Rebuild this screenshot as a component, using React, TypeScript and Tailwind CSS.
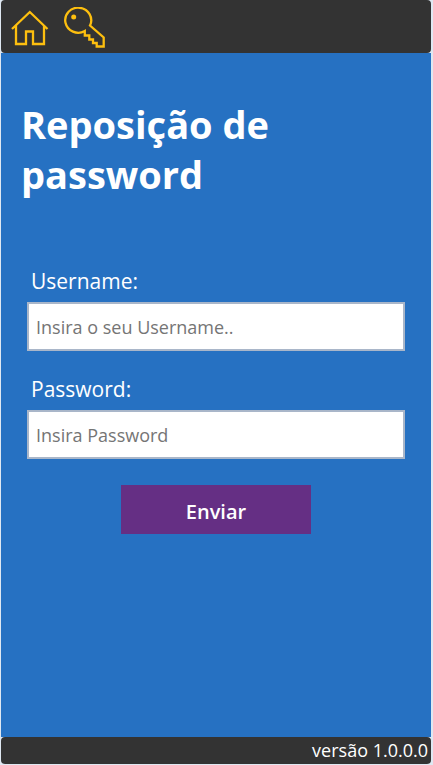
import React from "react";

function HomeIcon() {
  return (
    <svg width="38" height="36" viewBox="0 0 38 36" fill="none" stroke="#fdbf0f" strokeWidth="2.300" aria-hidden="true">
      <path d="M1 19 18.800 2l17.700 17M5 15.500V34H15V21.500H22V34H33V15.500" />
    </svg>
  );
}

function KeyIcon() {
  return (
    <svg width="42" height="42" viewBox="0 0 42 42" fill="none" stroke="#fdbf0f" strokeWidth="2.300" aria-hidden="true">
      <path d="M27 18.500A13 12.500 0 1 0 21.800 24V28.500H26.300V32.500H30V36H33.700V39.500H40.700V30.500z" />
      <circle cx="10.700" cy="10" r="2.500" fill="#fdbf0f" stroke="none" />
    </svg>
  );
}

type FieldProps = { id: string; label: string; type: string; placeholder: string };

function Field({ id, label, type, placeholder }: FieldProps) {
  return (
    <div>
      <label htmlFor={id} className="block pl-1 text-[21px] leading-8 text-white">
        {label}
      </label>
      <input
        id={id}
        type={type}
        placeholder={placeholder}
        className="mt-[5px] block h-[49px] w-full border-2 border-[#a9b6c9] bg-white px-[7px] text-lg text-gray-800 placeholder:text-[#757575] focus:outline-none"
      />
    </div>
  );
}

export default function App() {
  return (
    <div className="flex min-h-screen flex-col bg-[#dfe8f2] pb-px pl-px pr-[2px] font-['Open_Sans','Noto_Sans',sans-serif]">
      <header className="flex h-[53px] items-start gap-[14px] rounded-sm bg-[#333333] pl-[10px] pt-[7px]">
        <a href="#home" aria-label="Início" className="pt-[3px]">
          <HomeIcon />
        </a>
        <a href="#password" aria-label="Password">
          <KeyIcon />
        </a>
      </header>
      <main className="flex-1 bg-[#2671c2] pt-[46px]">
        <h1 className="px-5 text-[38px] font-bold leading-[50px] text-white">
          Reposição de
          <br />
          password
        </h1>
        <form className="px-[26px] pt-[66px]" onSubmit={(e) => e.preventDefault()}>
          <div className="flex flex-col gap-[22px]">
            <Field id="username" label="Username:" type="text" placeholder="Insira o seu Username.." />
            <Field id="password" label="Password:" type="password" placeholder="Insira Password" />
          </div>
          <button type="submit" className="mx-auto mt-[26px] block h-[49px] w-[190px] bg-[#652f84] pt-1 text-xl font-semibold text-white">
            Enviar
          </button>
        </form>
      </main>
      <footer className="rounded-sm bg-[#333333] px-[3px] text-right text-lg leading-[27px] text-white">versão 1.0.0.0</footer>
    </div>
  );
}
